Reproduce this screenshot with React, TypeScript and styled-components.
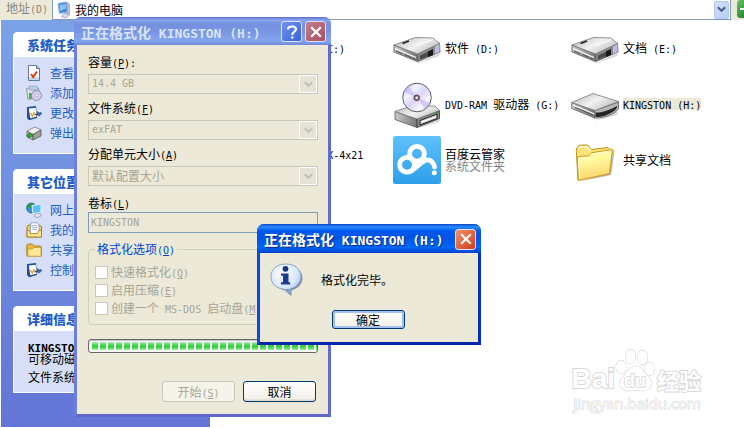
import React, { Fragment, ReactNode } from "react";
import styled, { createGlobalStyle, css } from "styled-components";

const cjk = '"Noto Sans CJK SC", sans-serif';
const mono = '"DejaVu Sans Mono", "Noto Sans CJK SC", monospace';

const Global = createGlobalStyle`
  * { box-sizing: border-box; }
  body { margin: 0; background: #fff; color: #000; font: 12px/14px ${cjk}; overflow: hidden; }
  button, input, select { font: inherit; margin: 0; }
  ul { list-style: none; margin: 0; padding: 0; }
  h2, p { margin: 0; font: inherit; }
  svg { display: block; flex: none; }
`;

/* ---------- text ---------- */

const Latin = styled.span<{ $size: number }>`
  font-family: ${mono};
  font-size: ${(p) => p.$size}px;
  line-height: 1px;
  white-space: pre;
`;

/* Half-width runs are set in the monospaced face; "&X" underlines X as the access key. */
function Text({ children, latin = 10 }: { children: string; latin?: number }) {
  return (
    <span>
      {children.split(/([\x20-\x7e]+)/).map((run, i) =>
        i % 2 ? (
          <Latin key={i} $size={latin}>
            {run.split(/&(.)/).map((part, j) => (j % 2 ? <u key={j}>{part}</u> : part))}
          </Latin>
        ) : (
          <Fragment key={i}>{run}</Fragment>
        )
      )}
    </span>
  );
}

/* ---------- small icons ---------- */

const MyComputerIcon = () => (
  <svg width="16" height="18" viewBox="0 0 16 18">
    <path d="M1 2.5 9.5 1l1 10L2.5 12.5z" fill="#3f86e0" stroke="#8fb4e0" />
    <path d="M2.5 4 8.500 3l.6 4.500L3 10z" fill="#8cc4f8" />
    <path d="M10 1.500 12.500 3v11L10 13z" fill="#b9c1d6" stroke="#8993b0" strokeWidth=".6" />
    <path d="M4 15.500 8 12l4 2-3 3z" fill="#d7dcea" stroke="#8f98b4" strokeWidth=".7" />
  </svg>
);

const SystemInfoIcon = () => (
  <svg width="16" height="16" viewBox="0 0 16 16">
    <path d="M2.500.5h8l3 3v12h-11z" fill="#fff" stroke="#5c7a9c" />
    <path d="M3 12h10v3H3z" fill="#c9d8ea" />
    <path d="M10.500.5v3h3" fill="#a9c4e4" stroke="#5c7a9c" />
    <path d="m5 9 2.200 3L11 6.500" fill="none" stroke="#e03a10" strokeWidth="2" />
  </svg>
);

const ProgramsIcon = () => (
  <svg width="16" height="16" viewBox="0 0 16 16">
    <path d="M.5 3.500 11 2l2 2v8L2 14.500z" fill="#d9dee8" stroke="#929db2" />
    <path d="M3 1h8l1 4H4z" fill="#b7cdea" stroke="#8c9fc0" strokeWidth=".7" />
    <path d="M3 8h3v6H3z" fill="#3fb24a" />
    <circle cx="10.500" cy="10.500" r="5" fill="#d8cdf2" stroke="#8d8aa8" />
    <circle cx="10.500" cy="10.500" r="1.500" fill="#fff" stroke="#9a96b8" strokeWidth=".7" />
  </svg>
);

const SettingIcon = () => (
  <svg width="16" height="16" viewBox="0 0 16 16">
    <path d="m1 2 9-1 1 12-8 2.200L1 13z" fill="#1f4f94" />
    <path d="m2.800 3.500 6.900-.8.700 9L4.300 13.300z" fill="#fff" />
    <path d="m4.500 8 1.700 3L8.500 7" fill="none" stroke="#e0a52a" strokeWidth="1.400" />
    <path d="M8.500 9.500H12" stroke="#7a4a20" strokeWidth="1.600" />
    <path d="M11.500 6.500 13 8l2-.5.500 1.500-2.500 2-1.500-1z" fill="#2f6fc0" stroke="#1c3f74" strokeWidth=".6" />
  </svg>
);

const EjectIcon = () => (
  <svg width="16" height="16" viewBox="0 0 16 16">
    <path d="m1 6 8-4 6 3-8 4.500z" fill="#f1f1f1" stroke="#777" strokeWidth=".8" />
    <path d="m1 6 6 3.500V15l-6-3z" fill="#c5c5c5" stroke="#666" strokeWidth=".8" />
    <path d="M7 9.500 15 5v6l-8 4z" fill="#a0a0a0" stroke="#555" strokeWidth=".8" />
    <path d="m.5 10.500 3-2.500v1.300h3v2.500h-3V13z" fill="#2fae32" stroke="#12661a" strokeWidth=".6" />
  </svg>
);

const NetworkIcon = () => (
  <svg width="16" height="16" viewBox="0 0 16 16">
    <circle cx="5.500" cy="6" r="5" fill="#2f9a48" stroke="#1c5f8c" strokeWidth=".7" />
    <path d="M1 6c2-1 3 1 4 0s2-4 4-3l-1 7H3z" fill="#3f8fe0" />
    <path d="M6 3.500 15 2v8L7 11.500z" fill="#5cc0f4" stroke="#e8eefc" />
    <path d="m8 14 3-3 4 1v2l-4 1.700z" fill="#e3e3ee" stroke="#8a8fa8" strokeWidth=".7" />
  </svg>
);

const DocumentsIcon = () => (
  <svg width="16" height="16" viewBox="0 0 16 16">
    <path d="M1 4.500 3 3h10.500l2 2v10H1z" fill="#f2cf62" stroke="#a87a1c" />
    <path d="M5 .8h6.500L13 3v9H4z" fill="#fff" stroke="#7b93b8" strokeWidth=".8" />
    <path d="M6 3.500h5M6 5.500h5M6 7.500h5" stroke="#7fa3d8" strokeWidth=".8" />
    <path d="M1 15V8.500h2.500l1 3h7l1-3h3V15z" fill="#fbe48e" stroke="#a87a1c" strokeWidth=".8" />
  </svg>
);

const FolderIcon = () => (
  <svg width="16" height="16" viewBox="0 0 16 16">
    <path d="M.8 13.500V3.500l1-1.500h4.500l1.500 2h6.500l1 1v9H1.500z" fill="#e9b83e" stroke="#a87a1c" strokeWidth=".9" />
    <path d="M2 14.200V7h4.500L8 5.500h7v8.700z" fill="#fdea9a" stroke="#c29428" strokeWidth=".7" />
  </svg>
);

const Chevron = ({ color }: { color: string }) => (
  <svg width="9" height="7" viewBox="0 0 9 7">
    <path d="m.8 1.200 3.700 3.600 3.700-3.600" fill="none" stroke={color} strokeWidth="2.200" />
  </svg>
);

/* ---------- large icons ---------- */

const Gradients = () => (
  <defs>
    <linearGradient id="top" x1="0" y1="0" x2="1" y2="0.600">
      <stop offset="0" stopColor="#b4b4b6" />
      <stop offset=".55" stopColor="#f2f2f2" />
      <stop offset="1" stopColor="#c2c2c4" />
    </linearGradient>
    <linearGradient id="side" x1="0" y1="0" x2="1" y2="0">
      <stop offset="0" stopColor="#c9c9cb" />
      <stop offset="1" stopColor="#77777a" />
    </linearGradient>
    <linearGradient id="gold" x1="0" y1="0" x2="0.200" y2="1">
      <stop offset="0" stopColor="#fff8a8" />
      <stop offset=".4" stopColor="#fffa9e" />
      <stop offset="1" stopColor="#fdd56c" />
    </linearGradient>
    <linearGradient id="disc" x1="0" y1="0" x2="1" y2="1">
      <stop offset="0" stopColor="#c9c6f4" />
      <stop offset=".3" stopColor="#f4f3ff" />
      <stop offset=".5" stopColor="#d9d4fa" />
      <stop offset=".75" stopColor="#fbfaff" />
      <stop offset="1" stopColor="#bdbcf0" />
    </linearGradient>
    <linearGradient id="sky" x1="0" y1="0" x2="0" y2="1">
      <stop offset="0" stopColor="#5fc0fb" />
      <stop offset="1" stopColor="#2c9fe9" />
    </linearGradient>
  </defs>
);

const HardDriveIcon = () => (
  <svg width="48" height="48" viewBox="0 0 48 48">
    <Gradients />
    <path d="M3 29 25 39l22-10-1 3-21 7.500z" fill="#bbb" opacity=".6" />
    <path d="M1 21v7l23.500 9.500V30z" fill="url(#side)" stroke="#555" strokeWidth=".8" />
    <path d="M24.500 30 46.500 19l.5 9-22 9.500z" fill="#8a8a8e" stroke="#555" strokeWidth=".8" />
    <path d="M1 21 22.500 13.500 40 14l6.500 5.500L24.500 30z" fill="url(#top)" stroke="#777" strokeWidth=".8" />
    <path d="M9.500 19.500 16 17" stroke="#222" strokeWidth="1.800" />
    <path d="M2 24.500 23 33.500" stroke="#fff" strokeWidth="1.200" />
    <path d="M3 27 22 35" stroke="#555" strokeWidth="1.100" strokeDasharray="7 2" />
    <path d="M24 22c5-3 12-4 16-7" fill="none" stroke="#fff" strokeWidth="1.400" opacity=".8" />
    <path d="m27 31.500 13-6v5l-13 5z" fill="#4a4a4e" />
    <path d="m35 27.500 5-2.500v6l-5 2z" fill="#18181a" />
    <path d="m42 22.500 4.500-2.500v8L42 30z" fill="#b9bce6" />
  </svg>
);

const DvdIcon = () => (
  <svg width="48" height="48" viewBox="0 0 48 48">
    <Gradients />
    <path d="M4 40 25 48l22-9-1 3-21 6z" fill="#bbb" opacity=".6" />
    <path d="M2 31.500v8L24 47.500V39z" fill="url(#side)" stroke="#555" strokeWidth=".8" />
    <path d="M24 39 46.500 30.500v8L24 47.500z" fill="#8d8d90" stroke="#333" strokeWidth=".8" />
    <path d="M2 31.500 18 26h24l4.500 4.500L24 39z" fill="url(#top)" stroke="#777" strokeWidth=".8" />
    <path d="m27 40.500 17-6.500v4.500L27 45z" fill="#c9c9cc" stroke="#222" />
    <path d="m28 42.200 15-5.400" stroke="#fff" strokeWidth="1.300" />
    <circle cx="44" cy="32.500" r="1.300" fill="#2c9a24" />
    <circle cx="24" cy="17.500" r="14.300" fill="url(#disc)" stroke="#5f5f68" />
    <path d="M24 17.500 11 12a14 14 0 0 1 5-6z" fill="#aaa8f0" opacity=".5" />
    <path d="m24 17.500 13 5.500a14 14 0 0 1-5 6z" fill="#aaa8f0" opacity=".5" />
    <circle cx="23.700" cy="17.800" r="4.800" fill="#f5c9ea" opacity=".7" />
    <circle cx="23.700" cy="17.800" r="2.800" fill="#77777c" stroke="#333" strokeWidth=".8" />
    <circle cx="23.700" cy="17.800" r="1.200" fill="#fff" />
  </svg>
);

const RemovableIcon = () => (
  <svg width="48" height="48" viewBox="0 0 48 48">
    <Gradients />
    <path d="M3 30 25 40l22-8-1 3-21 5.500z" fill="#bbb" opacity=".6" />
    <path d="M.8 22.500v6L24 38v-7.500z" fill="url(#side)" stroke="#555" strokeWidth=".8" />
    <path d="M23.500 30.500 47.500 22v6.500c-2 5-16 10.500-24 9.500z" fill="#b5b5b8" stroke="#555" strokeWidth=".8" />
    <path d="M.8 22.500 22 13.500l25.500 8L24 30.500z" fill="url(#top)" stroke="#777" strokeWidth=".8" />
    <path d="m1.500 25 22 9" stroke="#fff" strokeWidth="1.300" />
    <path d="m4 27.500 18 7.500" stroke="#555" strokeWidth="1.200" />
    <path d="M24.500 32.500c7 .5 15-3 21.500-6.500 1 5-14 12-21.500 11z" fill="#242427" />
  </svg>
);

const CloudIcon = () => (
  <svg width="48" height="48" viewBox="0 0 48 48">
    <Gradients />
    <rect width="48" height="48" rx="2.500" fill="url(#sky)" />
    <g fill="none" stroke="#fff" strokeWidth="4.800">
      <circle cx="24" cy="17.800" r="7.400" />
      <circle cx="14" cy="28.800" r="7.400" />
      <path d="M18.500 35 29 26.500c4-3.500 8-3.300 10.500 0 1.300 1.800 2 3 2 4.500" strokeLinecap="round" />
    </g>
    <circle cx="41.300" cy="36.700" r="2.500" fill="#fff" />
  </svg>
);

const SharedFolderIcon = () => (
  <svg width="48" height="48" viewBox="0 0 48 48">
    <Gradients />
    <path d="M9 45.500 40 39l3.500-24-1-1-4 23z" fill="#999" opacity=".7" />
    <path d="M7 44 5.300 14.500 6 11.500 8.500 9.200l8-.2 4 4.500L37 11.500l2 2 2.500.5-3 23.500z" fill="#fbe27a" stroke="#c08f10" />
    <path d="M7.500 44.500 6.500 21.500 9 20.300l8.500-.3 3-3.300 21-3.200-3 24z" fill="url(#gold)" stroke="#cf9a1a" />
    <path d="m7.500 12.500 2-1.800h6.500l3.500 4" fill="none" stroke="#fffbe0" strokeWidth="1.400" />
    <path d="M8.500 43 7.700 22.500 18 21.500l3-3.400 19-3" fill="none" stroke="#fffde0" strokeWidth="1" />
  </svg>
);

const InfoIcon = () => (
  <svg width="34" height="34" viewBox="0 0 34 34">
    <defs>
      <radialGradient id="bubble" cx=".4" cy=".3" r=".75">
        <stop offset="0" stopColor="#fff" />
        <stop offset=".6" stopColor="#dbe9fb" />
        <stop offset="1" stopColor="#8fb2e6" />
      </radialGradient>
    </defs>
    <path d="M17.500 3C26 3 32.500 7.500 32.500 15c0 6-4.500 10.500-11 12.200V33l-6-5.300C8 26 3 21 3 15S9 3 17.500 3z" fill="#6b7480" opacity=".8" />
    <path d="M16 1C25 1 31 6.500 31 13.500c0 6-4 10.500-10.500 12.200L20 32l-6-5.800C5.500 25.500 1 20 1 13.500 1 6.500 7 1 16 1z" fill="url(#bubble)" stroke="#8aa5cf" />
    <path d="m14.500 26 5.200 5.200.3-5.200z" fill="#7c9fd4" />
    <circle cx="15.500" cy="5.800" r="2.900" fill="#15357f" />
    <path d="M11 10.500h7.500v8.700h1.700v2.300H11v-2.300h2v-6.400h-2z" fill="#1a3d92" />
  </svg>
);

/* ---------- page frame ---------- */

const Page = styled.div`
  position: relative;
  display: grid;
  grid-template-rows: auto 1fr;
  min-height: 100vh;
`;

const AddressBar = styled.form`
  display: grid;
  grid-template-columns: 52px 1fr 13px;
  height: 20px;
  background: #ece9d8;
`;

const AddressLabel = styled.label`
  padding: 0 0 4px 6px;
  line-height: 16px;
  color: #8a887c;
`;

const AddressField = styled.div`
  display: flex;
  align-items: center;
  gap: 2px;
  padding: 0 1px 0 4px;
  background: #fff;
  border: solid #7f9db9;
  border-width: 0 1px 1px;
`;

const AddressInput = styled.input`
  flex: 1;
  min-width: 0;
  height: 18px;
  padding: 0;
  border: 0;
  outline: 0;
  background: none;
`;

const DropButton = styled.button`
  display: grid;
  place-items: center;
  width: 15px;
  height: 18px;
  padding: 0;
  border: 1px solid #b4c8f6;
  border-radius: 2px;
  background: linear-gradient(135deg, #d5e1fd, #b5cbf8);
`;

const GoButton = styled.button`
  justify-self: end;
  width: 7px;
  height: 18px;
  padding: 0;
  border: 0;
  border-radius: 3px 0 0 3px;
  background: linear-gradient(135deg, #6bbf6b, #1f8a2a);
`;

const Columns = styled.div`
  display: grid;
  grid-template-columns: 209px 1fr;
  padding: 0 0 1px 1px;
`;

const Sidebar = styled.aside`
  display: flex;
  flex-direction: column;
  gap: 15px;
  padding: 12px;
  background: linear-gradient(#7ba2e7, #6375d6);
`;

const Panel = styled.section`
  border: 1px solid #fff;
  border-radius: 4px 4px 0 0;
  background: #d6dff7;
`;

const PanelTitle = styled.h2`
  padding-left: 13px;
  border-radius: 3px 3px 0 0;
  background: linear-gradient(90deg, #fff 40%, #c6d3f7);
  color: #215dc6;
  font-size: 13px;
  font-weight: 900;
  line-height: 24px;
`;

const TaskList = styled.ul`
  padding: 6px 12px 10px;
`;

const TaskLink = styled.a`
  display: flex;
  align-items: center;
  gap: 8px;
  height: 20px;
  color: #215dc6;
  text-decoration: none;
`;

const Details = styled.div`
  padding: 10px 14px 9px;
  line-height: 12px;

  p + p { margin-top: 6px; }
  b { display: block; }
`;

const Files = styled.ul`
  display: grid;
  grid-template-columns: repeat(auto-fill, 170px);
  grid-auto-rows: 48px;
  align-content: start;
  gap: 8px;
  padding: 4px 0 0 5px;
`;

const FileItem = styled.li<{ $column: number }>`
  grid-column: ${(p) => p.$column};
  display: flex;
  align-items: center;
  gap: 4px;
  line-height: 12px;
  white-space: nowrap;
`;

const FileName = styled.span<{ $selected?: boolean }>`
  display: block;
  ${(p) => p.$selected && css`background: #ece9d8;`}
`;

const FileNote = styled.span`
  display: block;
  color: #848484;
`;

/* ---------- windows ---------- */

const Window = styled.section<{ $active?: boolean }>`
  position: absolute;
  display: flex;
  flex-direction: column;
  border: 3px solid ${(p) => (p.$active ? "#0a4ae4" : "#6b7fde")};
  border-top: 0;
  border-radius: 7px 7px 0 0;
  background: #ece9d8;
  outline: 0;
  ${(p) => p.$active
    ? css`left: 257px; top: 224px; width: 224px; border-right-color: #0230c4; border-bottom-color: #0126a8;`
    : css`left: 74px; top: 17px; width: 257px; border-right-color: #5f6ccf; border-bottom-color: #5f66c8;`}
`;

const TitleBar = styled.header<{ $active?: boolean }>`
  display: flex;
  align-items: center;
  gap: 3px;
  height: ${(p) => (p.$active ? 29 : 28)}px;
  margin: 0 -3px;
  padding: 1px 5px 0 7px;
  border-radius: 7px 7px 0 0;
  color: ${(p) => (p.$active ? "#fff" : "#d8e4f8")};
  font-size: 14px;
  font-weight: 700;
  white-space: nowrap;
  ${(p) => p.$active
    ? css`
        background: linear-gradient(#0a48c8, #2b8bff 3px, #0058ee 7px, #0054e3 50%, #0067fb 80%, #0040c8);
        text-shadow: 1px 1px 1px #0a2a80;
      `
    : css`background: linear-gradient(#5c70d0, #8aa6ec 3px, #7590e0 7px, #7894e1 50%, #84a6ee 85%, #7088dc);`}
`;

const TitleText = styled.span`
  flex: 1;
`;

const CaptionButton = styled.button<{ $color: string }>`
  display: grid;
  place-items: center;
  width: 21px;
  height: 21px;
  padding: 0;
  border: 1px solid #dbe4fa;
  border-radius: 3px;
  background: ${(p) => p.$color};
`;

const CloseGlyph = () => (
  <svg width="12" height="12" viewBox="0 0 12 12">
    <path d="m1.200 1.200 9.600 9.600m0-9.600-9.600 9.600" stroke="#fff" strokeWidth="2.200" />
  </svg>
);

const HelpGlyph = () => (
  <svg width="12" height="14" viewBox="0 0 12 14">
    <path d="M2 4.500C2 .5 10 .5 10 4.300 10 6.500 6.200 7 6.200 10" fill="none" stroke="#fff" strokeWidth="2.200" />
    <path d="M5 11.500h2.400v2H5z" fill="#fff" />
  </svg>
);

const FormatForm = styled.form`
  display: flex;
  flex-direction: column;
  gap: 7px;
  padding: 10px 10px 12px 11px;
`;

const Field = styled.div<{ $tight?: boolean }>`
  display: grid;
  gap: ${(p) => (p.$tight ? 2 : 5)}px;
  margin-top: ${(p) => (p.$tight ? 3 : 0)}px;
`;

const Combo = styled.div`
  display: grid;
  align-items: center;
`;

const Select = styled.select<{ $latin?: boolean }>`
  grid-area: 1 / 1;
  appearance: none;
  height: 20px;
  padding: 0 20px 0 3px;
  border: 1px solid #c9c7ba;
  border-radius: 0;
  background: #ece9d8;
  color: #a7a596;
  opacity: 1;
  ${(p) => p.$latin && css`font-family: ${mono}; font-size: 10px;`}
`;

const ComboArrow = styled.span`
  grid-area: 1 / 1;
  justify-self: end;
  display: grid;
  place-items: center;
  width: 18px;
  height: 18px;
  margin-right: 1px;
  border: 1px solid #fff;
  background: #e6e3d6;
  pointer-events: none;
`;

const VolumeInput = styled.input`
  height: 21px;
  padding: 0 2px;
  border: 1px solid #7f9db9;
  background: #ece9d8;
  color: #a7a596;
  font-family: ${mono};
  font-size: 10px;
`;

const Options = styled.fieldset`
  min-width: 0;
  margin: 2px 0 0;
  padding: 7px 6px 7px;
  border: 1px solid #d0d0bf;
  border-radius: 4px;
`;

const Legend = styled.legend`
  padding: 0 2px;
  color: #0046d5;
`;

const Check = styled.label`
  display: flex;
  align-items: center;
  gap: 3px;
  height: 18px;
  color: #a7a596;
  white-space: nowrap;
`;

const CheckBox = styled.input`
  appearance: none;
  flex: none;
  width: 13px;
  height: 13px;
  border: 1px solid #cac8bb;
  background: #fff;
`;

const Progress = styled.progress`
  appearance: none;
  display: block;
  width: 100%;
  height: 14px;
  margin-top: 7px;
  padding: 2px 0 2px 3px;
  border: 1px solid #686868;
  border-radius: 3px;
  background: #fff;
  box-shadow: inset 0 1px 1px #bebebe;

  &::-webkit-progress-bar { background: none; }
  &::-webkit-progress-value {
    background:
      repeating-linear-gradient(90deg, transparent 0 6px, #fff 6px 8px),
      linear-gradient(#b4efb4, #32d33a 45%, #32d33a 60%, #a2eaa4);
  }
`;

const Actions = styled.footer`
  display: flex;
  justify-content: flex-end;
  gap: 8px;
  margin-top: 21px;
  padding-right: 2px;
`;

const PushButton = styled.button<{ $focused?: boolean; $low?: boolean }>`
  width: 73px;
  height: ${(p) => (p.$low ? 19 : 21)}px;
  padding: 0;
  border: 1px solid #003c74;
  border-radius: 3px;
  background: linear-gradient(#fff, #f3f1ea 85%, #d9d3c6);
  color: #000;
  line-height: 14px;
  ${(p) => p.$focused && css`box-shadow: inset 0 0 0 2px #a4bff0;`}

  &:disabled { border-color: #c9c7ba; background: #f5f4ea; color: #a7a596; }
`;

const Message = styled.div`
  display: grid;
  justify-items: center;
  gap: 13px;
  padding: 10px 12px 13px 10px;
`;

const MessageBody = styled.div`
  display: flex;
  align-items: center;
  justify-self: stretch;
  gap: 17px;
`;

/* ---------- watermark ---------- */

const Watermark = styled.div`
  position: absolute;
  right: 43px;
  bottom: 16px;
  display: grid;
  color: #fff;
  -webkit-text-stroke: 2px #dadada;
  paint-order: stroke fill;
  pointer-events: none;
`;

const WatermarkLogo = styled.div`
  display: flex;
  align-items: flex-end;
  font: 700 28px/30px "Liberation Sans", sans-serif;
`;

const WatermarkHan = styled.span`
  font: 700 22px/30px ${cjk};
`;

const WatermarkSite = styled.span`
  color: #f6f6f6;
  font: 15px/18px "Open Sans", sans-serif;
  -webkit-text-stroke-width: 1px;
  text-align: right;
`;

const Paw = () => (
  <svg width="42" height="46" viewBox="0 0 42 46">
    <g fill="#fff" stroke="#dadada" strokeWidth="1.300">
      <ellipse cx="6" cy="19" rx="5" ry="6.500" />
      <ellipse cx="15.500" cy="8.500" rx="5" ry="7" />
      <ellipse cx="27.500" cy="9.500" rx="5" ry="7" />
      <ellipse cx="34.500" cy="21" rx="5" ry="6.500" />
      <path d="M20.500 18c6 0 8 6 12 10s5 8 3 11-6 4-9 3.500-9-.5-12 0-7-1-9-4 0-7 3.500-10.500S14.500 18 20.500 18z" />
    </g>
    <text x="20" y="39" textAnchor="middle" fontFamily="Liberation Sans, sans-serif" fontSize="18" fontWeight="700" fill="#fff" stroke="#d4d4d4" strokeWidth="1.500">
      du
    </text>
  </svg>
);

/* ---------- content ---------- */

const tasks: [string, [() => ReactNode, string][]][] = [
  ["系统任务", [[SystemInfoIcon, "查看系统信息"], [ProgramsIcon, "添加/删除程序"], [SettingIcon, "更改一个设置"], [EjectIcon, "弹出这张磁盘"]]],
  ["其它位置", [[NetworkIcon, "网上邻居"], [DocumentsIcon, "我的文档"], [FolderIcon, "共享文档"], [SettingIcon, "控制面板"]]],
];

const files: { column: number; icon: () => ReactNode; name: string; note?: string; selected?: boolean }[] = [
  { column: 1, icon: HardDriveIcon, name: "本地磁盘 (C:)" },
  { column: 2, icon: HardDriveIcon, name: "软件 (D:)" },
  { column: 3, icon: HardDriveIcon, name: "文档 (E:)" },
  { column: 2, icon: DvdIcon, name: "DVD-RAM 驱动器 (G:)" },
  { column: 3, icon: RemovableIcon, name: "KINGSTON (H:)", selected: true },
  { column: 1, icon: HardDriveIcon, name: "Samsung SCX-4x21", note: "扫描仪" },
  { column: 2, icon: CloudIcon, name: "百度云管家", note: "系统文件夹" },
  { column: 3, icon: SharedFolderIcon, name: "共享文档" },
];

const combos: { id: string; label: string; value: string; latin?: boolean }[] = [
  { id: "capacity", label: "容量(&P):", value: "14.4 GB", latin: true },
  { id: "filesystem", label: "文件系统(&F)", value: "exFAT", latin: true },
  { id: "unit", label: "分配单元大小(&A)", value: "默认配置大小" },
];

const options = ["快速格式化(&Q)", "启用压缩(&E)", "创建一个 MS-DOS 启动盘(&M)"];

export default function App() {
  return (
    <>
      <Global />
      <Page>
        <AddressBar>
          <AddressLabel htmlFor="address"><Text>地址(D)</Text></AddressLabel>
          <AddressField>
            <MyComputerIcon />
            <AddressInput id="address" defaultValue="我的电脑" />
            <DropButton type="button" aria-label="展开地址"><Chevron color="#4d6185" /></DropButton>
          </AddressField>
          <GoButton type="button" aria-label="转到">
            <svg width="7" height="18" viewBox="0 0 7 18"><path d="M3 9h4" stroke="#fff" strokeWidth="2" /></svg>
          </GoButton>
        </AddressBar>

        <Columns>
          <Sidebar>
            {tasks.map(([title, items]) => (
              <Panel key={title}>
                <PanelTitle>{title}</PanelTitle>
                <TaskList>
                  {items.map(([Icon, label]) => (
                    <li key={label}><TaskLink href="#"><Icon /><span>{label}</span></TaskLink></li>
                  ))}
                </TaskList>
              </Panel>
            ))}
            <Panel>
              <PanelTitle>详细信息</PanelTitle>
              <Details>
                <p><b><Text latin={11}>KINGSTON (H:)</Text></b>可移动磁盘</p>
                <p><Text>文件系统: exFAT</Text></p>
              </Details>
            </Panel>
          </Sidebar>

          <Files>
            {files.map(({ column, icon: Icon, name, note, selected }) => (
              <FileItem key={name} $column={column}>
                <Icon />
                <div>
                  <FileName $selected={selected}><Text>{name}</Text></FileName>
                  {note && <FileNote>{note}</FileNote>}
                </div>
              </FileItem>
            ))}
          </Files>
        </Columns>

        <Watermark>
          <WatermarkLogo>
            Bai<Paw /><WatermarkHan>经验</WatermarkHan>
          </WatermarkLogo>
          <WatermarkSite>jingyan.baidu.com</WatermarkSite>
        </Watermark>

        <Window role="dialog" aria-label="格式化">
          <TitleBar>
            <TitleText><Text latin={13}>正在格式化 KINGSTON (H:)</Text></TitleText>
            <CaptionButton $color="linear-gradient(135deg, #6f93ee, #3a62dc)" aria-label="帮助"><HelpGlyph /></CaptionButton>
            <CaptionButton $color="linear-gradient(135deg, #c08090, #a85060)" aria-label="关闭"><CloseGlyph /></CaptionButton>
          </TitleBar>
          <FormatForm>
            {combos.map(({ id, label, value, latin }) => (
              <Field key={id}>
                <label htmlFor={id}><Text>{label}</Text></label>
                <Combo>
                  <Select id={id} $latin={latin} disabled><option>{value}</option></Select>
                  <ComboArrow><Chevron color="#c4c2b4" /></ComboArrow>
                </Combo>
              </Field>
            ))}
            <Field $tight>
              <label htmlFor="volume"><Text>卷标(&L)</Text></label>
              <VolumeInput id="volume" defaultValue="KINGSTON" disabled />
            </Field>
            <Options>
              <Legend><Text>格式化选项(&O)</Text></Legend>
              {options.map((label) => (
                <Check key={label}><CheckBox type="checkbox" disabled /><Text>{label}</Text></Check>
              ))}
            </Options>
            <Progress value={100} max={100} aria-label="格式化进度" />
            <Actions>
              <PushButton type="button" disabled><Text>开始(&S)</Text></PushButton>
              <PushButton type="button">取消</PushButton>
            </Actions>
          </FormatForm>
        </Window>

        <Window $active role="alertdialog" aria-label="格式化完毕">
          <TitleBar $active>
            <TitleText><Text latin={13}>正在格式化 KINGSTON (H:)</Text></TitleText>
            <CaptionButton $color="linear-gradient(135deg, #f0906c, #d43c14)" aria-label="关闭"><CloseGlyph /></CaptionButton>
          </TitleBar>
          <Message>
            <MessageBody><InfoIcon /><p>格式化完毕。</p></MessageBody>
            <PushButton type="button" $focused $low>确定</PushButton>
          </Message>
        </Window>
      </Page>
    </>
  );
}
